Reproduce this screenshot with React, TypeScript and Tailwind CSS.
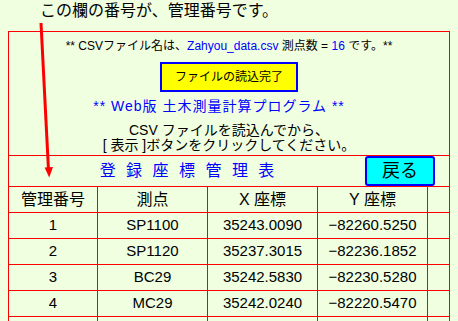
import React from "react";

const rows = [
  ["1", "SP1100", "35243.0090", "−82260.5250"],
  ["2", "SP1120", "35237.3015", "−82236.1852"],
  ["3", "BC29", "35242.5830", "−82230.5280"],
  ["4", "MC29", "35242.0240", "−82220.5470"],
  ["", "", "", ""],
];

export default function App() {
  return (
    <div
      className="relative w-[458px] h-[321px] overflow-hidden bg-[#f0ffe0] text-black"
      style={{ fontFamily: '"Liberation Sans", "Noto Sans CJK JP", sans-serif' }}
    >
      <div className="h-[31px] pl-[40px] text-[16px] leading-[22px]">この欄の番号が、管理番号です。</div>
      <div className="mx-2 border border-[#ff0000]">
        <div className="h-[124px] border-b border-[#ff0000] flex flex-col items-center">
          <div className="mt-[6px] text-[12px] leading-[16px] whitespace-nowrap">
            ** CSVファイル名は、<span className="text-[#0000ff]">Zahyou_data.csv</span> 測点数 ={" "}
            <span className="text-[#0000ff]">16</span> です。**
          </div>
          <button className="mt-[8px] w-[138px] h-[30px] bg-[#ffff00] border-2 border-[#0000ff] text-[12px] leading-[16px] text-black">
            ファイルの読込完了
          </button>
          <div className="mt-[5px] pr-[20px] text-[14px] leading-[18px] tracking-[1px] text-[#0000ff] whitespace-nowrap">
            ** Web版 土木測量計算プログラム **
          </div>
          <div className="mt-[8px] text-center whitespace-nowrap text-[14px] leading-[15px]">
            <div>CSV ファイルを読込んでから、</div>
            <div>[ 表示 ]ボタンをクリックしてください。</div>
          </div>
        </div>
        <div className="h-[31px] border-b border-[#ff0000] flex items-start">
          <div className="flex-1 h-[30px] flex items-center justify-center text-[16px] text-[#0000ff] [word-spacing:6px]">
            登 録 座 標 管 理 表
          </div>
          <button className="w-[70px] h-[30px] mr-[14px] bg-[#00ffff] border-2 border-[#0000ff] rounded-[3px] text-[18px] leading-[20px] text-black">
            戻る
          </button>
        </div>
        <div className="grid grid-cols-[89px_110px_110px_110px_21px] text-[16px]">
          {["管理番号", "測点", "X 座標", "Y 座標", ""].map((h, i) => (
            <div
              key={i}
              className={`h-[26px] flex items-center justify-center border-b border-[#ff0000] ${i < 4 ? "border-r" : ""}`}
            >
              {h}
            </div>
          ))}
          {rows.map((r, ri) => (
            <React.Fragment key={ri}>
              {[...r, ""].map((c, i) => (
                <div
                  key={i}
                  className={`h-[26px] flex items-center justify-center border-b border-[#ff0000] text-[15px] ${i < 4 ? "border-r" : ""}`}
                >
                  {c}
                </div>
              ))}
            </React.Fragment>
          ))}
        </div>
      </div>
      <svg className="absolute left-0 top-0 pointer-events-none" width="458" height="321" viewBox="0 0 458 321">
        <line x1="41" y1="23" x2="48.4" y2="168" stroke="#ff0000" strokeWidth="3" />
        <polygon points="44.6,167.5 53,167 49.2,177.5" fill="#ff0000" />
      </svg>
    </div>
  );
}
